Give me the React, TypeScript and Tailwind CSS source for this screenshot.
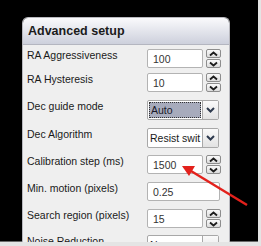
import React from "react";

type Row = {
  label: string;
  kind: "spin" | "text" | "select" | "focus";
  value: string;
  mt: string;
};

const rows: Row[] = [
  { label: "RA Aggressiveness", kind: "spin", value: "100", mt: "mt-0" },
  { label: "RA Hysteresis", kind: "spin", value: "10", mt: "mt-[5px]" },
  { label: "Dec guide mode", kind: "focus", value: "Auto", mt: "mt-[8px]" },
  { label: "Dec Algorithm", kind: "select", value: "Resist swit", mt: "mt-[8px]" },
  { label: "Calibration step (ms)", kind: "spin", value: "1500", mt: "mt-[7px]" },
  { label: "Min. motion (pixels)", kind: "text", value: "0.25", mt: "mt-[8px]" },
  { label: "Search region (pixels)", kind: "spin", value: "15", mt: "mt-[8px]" },
  { label: "Noise Reduction", kind: "select", value: "None", mt: "mt-[7px]" },
];

const Caret = ({ down }: { down?: boolean }) => (
  <svg width="9" height="6" viewBox="0 0 9 6">
    <path
      d={down ? "M1 1.5 L4.5 4.5 L8 1.5" : "M1 4.5 L4.5 1.5 L8 4.5"}
      fill="none"
      stroke="#1c1c1c"
      strokeWidth="1.8"
    />
  </svg>
);

const Spinner = () => (
  <div className="ml-[3px] flex h-[19px] w-[15px] flex-col gap-px">
    <div className="flex h-[9px] items-center justify-center rounded-[2px] border border-[#8d8d8d] bg-gradient-to-b from-[#fbfbfb] to-[#dcdcdc]">
      <Caret />
    </div>
    <div className="flex h-[9px] items-center justify-center rounded-[2px] border border-[#8d8d8d] bg-gradient-to-b from-[#fbfbfb] to-[#dcdcdc]">
      <Caret down />
    </div>
  </div>
);

const DropButton = () => (
  <div className="flex h-full w-[16px] items-center justify-center border-l border-[#a8a8a8] bg-gradient-to-b from-[#fafafa] to-[#e2e2e2]">
    <svg width="9" height="6" viewBox="0 0 9 6">
      <path d="M1 1 L4.5 4.5 L8 1" fill="none" stroke="#2e3a4e" strokeWidth="2" />
    </svg>
  </div>
);

const Field = ({ row }: { row: Row }) => {
  if (row.kind === "text") {
    return (
      <div className="flex h-[19px] w-[73px] items-center rounded-[2px] border border-[#b3b3b3] bg-white pl-[5px] text-[#333]">
        {row.value}
      </div>
    );
  }
  if (row.kind === "spin") {
    return (
      <div className="flex items-start">
        <div className="flex h-[19px] w-[56px] items-center rounded-[2px] border border-[#b3b3b3] bg-white pl-[5px] text-[#333]">
          {row.value}
        </div>
        <Spinner />
      </div>
    );
  }
  return (
    <div className="flex h-[20px] w-[72px] items-stretch rounded-[2px] border border-[#a8a8a8] bg-white">
      {row.kind === "focus" ? (
        <div className="flex flex-1 p-[1px]">
          <div className="flex flex-1 items-center border border-dotted border-[#333] bg-[#a7abbc] pl-[1px] text-[#1a1a2a]">
            {row.value}
          </div>
        </div>
      ) : (
        <div className="flex flex-1 items-center pl-[2px] text-[#1a1a1a]">{row.value}</div>
      )}
      <DropButton />
    </div>
  );
};

export default function App() {
  return (
    <div className="relative h-[246px] w-[261px] overflow-hidden bg-[#e4e4e4] font-['Liberation_Sans',Arial,sans-serif]">
      <div className="h-[242px] w-[258px] border-b border-[#6a6a6a] bg-black pl-[22px] pt-[17px]">
        <div className="flex h-[225px] w-[208px] flex-col overflow-hidden rounded-t-[6px] border border-b-0 border-[#b9b9bf]">
          <div className="flex h-[26px] shrink-0 items-center bg-gradient-to-b from-[#fafafc] to-[#cdd0dc] pl-[5px] text-[12.5px] font-bold text-[#1b1b1b]">
            Advanced setup
          </div>
          <div className="flex flex-1 flex-col border-t border-[#b4b6c0] bg-[#efefef] pl-[4px] pt-[4px] text-[10.5px] leading-[12px]">
            {rows.map((row) => (
              <div key={row.label} className={`flex items-start ${row.mt}`}>
                <div className="w-[120px] shrink-0 text-[#1a1a1a]">{row.label}</div>
                <Field row={row} />
              </div>
            ))}
          </div>
        </div>
      </div>
      <svg className="absolute left-0 top-0" width="261" height="246" viewBox="0 0 261 246">
        <line x1="247" y1="205" x2="191" y2="171" stroke="#e3211c" strokeWidth="2.4" />
        <polygon points="182,166 195,166 189,176" fill="#e3211c" />
      </svg>
    </div>
  );
}
